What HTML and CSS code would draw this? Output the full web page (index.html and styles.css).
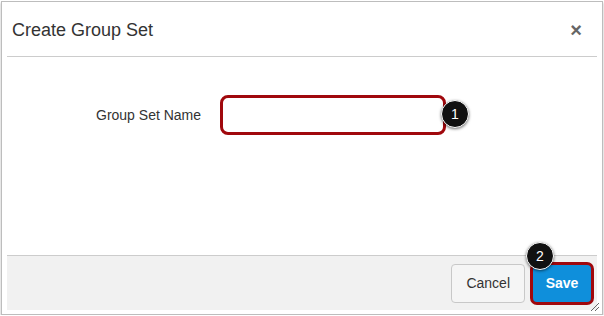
FILE: index.html
```html
<!DOCTYPE html>
<html lang="en">
  <head>
    <meta charset="UTF-8" />
    <title>Create Group Set</title>
    <link rel="stylesheet" href="styles.css">
  </head>
  <body>
    <div class="dialog">
      <!-- header -->
      <div class="dialog-header">
        <span class="dialog-title">Create Group Set</span>
        <span class="dialog-close">&times;</span>
      </div>

      <!-- form -->
      <div class="dialog-body">
        <div class="form-row">
          <label class="form-label">Group Set Name</label>
          <div class="input-wrap">
            <div class="text-input"></div>
            <span class="badge badge-input">1</span>
          </div>
        </div>
      </div>

      <!-- footer buttons -->
      <div class="dialog-footer">
        <button class="btn">Cancel</button>
        <div class="save-wrap">
          <button class="btn btn-primary">Save</button>
          <span class="badge badge-save">2</span>
        </div>
        <svg class="resize-handle" width="10" height="10" viewBox="0 0 10 10">
          <line x1="1" y1="9" x2="9" y2="1" stroke="#666" stroke-width="1" />
          <line x1="5" y1="9" x2="9" y2="5" stroke="#666" stroke-width="1" />
        </svg>
      </div>
    </div>
  </body>
</html>
```

FILE: styles.css
```css
body {
  margin: 0;
  background: #fff;
  font-family: "Liberation Sans", Arial, sans-serif;
}

.dialog {
  margin: 1px 0 0 1px;
  width: 590px;
  height: 308px;
  padding: 0 5px 4px;
  border: 1px solid #bdbdbd;
  box-shadow: 0 2px 2px rgba(0, 0, 0, 0.3);
  display: flex;
  flex-direction: column;
  background: #fff;
}

/* header */
.dialog-header {
  height: 54px;
  flex-shrink: 0;
  border-bottom: 1px solid #ccc;
  display: flex;
  align-items: center;
  justify-content: space-between;
  padding: 0 15px 0 5px;
}

.dialog-title {
  font-size: 18px;
  color: #333;
  padding-top: 2px;
}

.dialog-close {
  font-size: 20px;
  font-weight: bold;
  color: #666;
  padding-top: 2px;
}

/* body */
.dialog-body {
  flex: 1;
  padding-top: 38px;
}

.form-row {
  display: flex;
  align-items: center;
  padding-left: 89px;
}

.form-label {
  font-size: 14px;
  color: #333;
  width: 124px;
}

.input-wrap {
  position: relative;
}

.text-input {
  width: 220px;
  height: 34px;
  border: 3px solid #a0080d;
  border-radius: 8px;
  background: #fff;
}

.badge {
  position: absolute;
  width: 26px;
  height: 26px;
  border-radius: 50%;
  background: #111;
  border: 1.5px solid #fff;
  box-shadow: 0 1px 3px rgba(0, 0, 0, 0.55);
  color: #fff;
  font-size: 14px;
  display: flex;
  align-items: center;
  justify-content: center;
}

.badge-input {
  left: 221px;
  top: 5px;
}

/* footer */
.dialog-footer {
  position: relative;
  height: 54px;
  flex-shrink: 0;
  border-top: 1px solid #ccc;
  background: #f1f1f1;
  display: flex;
  align-items: center;
  justify-content: flex-end;
  gap: 5px;
  padding-right: 3px;
}

.btn {
  height: 39px;
  padding: 0 14px;
  font-family: "Liberation Sans", Arial, sans-serif;
  font-size: 14px;
  color: #333;
  background: #f5f5f5;
  border: 1px solid #c8c8c8;
  border-radius: 4px;
}

.save-wrap {
  position: relative;
}

.btn-primary {
  display: block;
  height: 43px;
  width: 64px;
  padding: 0;
  background: #0f8fdb;
  color: #fff;
  font-weight: bold;
  border: 3px solid #a0080d;
  border-radius: 7px;
}

.badge-save {
  left: -4px;
  top: -20px;
}

.resize-handle {
  position: absolute;
  right: -3px;
  bottom: -2px;
}
```
